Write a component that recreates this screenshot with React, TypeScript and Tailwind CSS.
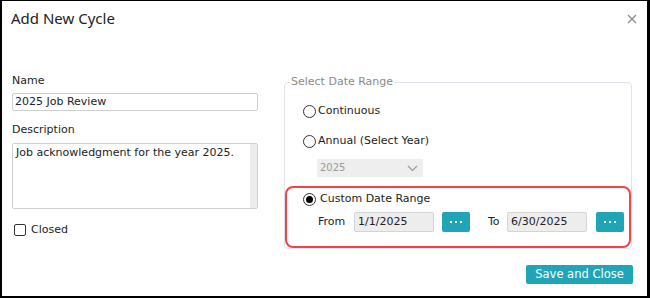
import type { ReactNode } from "react";

const body = "font-['DejaVu_Sans',sans-serif] text-[11px] leading-[14px] text-[#222]";

function Radio({ checked, children }: { checked?: boolean; children: ReactNode }) {
  return (
    <label className="flex h-[14px] items-center">
      <span className="flex h-[13px] w-[13px] items-center justify-center rounded-full border-[1.5px] border-[#333] bg-white">
        {checked && <span className="h-[7px] w-[7px] rounded-full bg-black" />}
      </span>
      <span className={checked ? "ml-[4px]" : "ml-[2px]"}>{children}</span>
    </label>
  );
}

function DateField({ value }: { value: string }) {
  return (
    <div className="flex h-[20px] w-[80px] items-center rounded-[2px] border border-[#d4d4d4] bg-[#ededed] pl-[3px]">
      {value}
    </div>
  );
}

function DotsButton() {
  return (
    <button className="flex h-[20px] w-[28px] items-center justify-center gap-[3px] rounded-[2px] bg-[#1fa5b6]">
      <span className="h-[2px] w-[2px] bg-white" />
      <span className="h-[2px] w-[2px] bg-white" />
      <span className="h-[2px] w-[2px] bg-white" />
    </button>
  );
}

export default function App() {
  return (
    <div
      className={`flex h-[298px] w-[650px] flex-col border-t border-l-2 border-r-[3px] border-b-2 border-black bg-white ${body}`}
    >
      {/* header */}
      <div className="flex h-[73px] items-start justify-between pl-[9px] pr-[10px] pt-[7px]">
        <h2 className="font-['Noto_Sans',sans-serif] text-[15px] leading-[20px] text-[#222]">
          Add New Cycle
        </h2>
        <svg width="10" height="10" viewBox="0 0 10 10" className="mt-[6px]">
          <path d="M1 1L9 9M9 1L1 9" stroke="#8a8a8a" strokeWidth="1.3" />
        </svg>
      </div>

      {/* body */}
      <div className="flex items-start pl-[10px] pr-[15px]">
        <div className="flex w-[246px] flex-col">
          <span>Name</span>
          <div className="mt-[5px] flex h-[18px] items-center rounded-[2px] border border-[#cfcfcf] pl-[2px]">
            2025 Job Review
          </div>
          <span className="mt-[12px]">Description</span>
          <div className="mt-[6px] flex h-[66px] rounded-[2px] border border-[#cfcfcf]">
            <div className="flex-1 pl-[3px] pt-[2px]">Job acknowledgment for the year 2025.</div>
            <div className="w-[7px] bg-[#ececec]" />
          </div>
          <label className="mt-[14px] flex h-[14px] items-center pl-[2px]">
            <span className="h-[12px] w-[12px] rounded-[2px] border border-[#333]" />
            <span className="ml-[5px]">Closed</span>
          </label>
        </div>

        <fieldset className="ml-[26px] mt-[1px] w-[348px] rounded-[4px] border border-[#dfe4ea] p-0">
          <legend className="ml-[5px] px-[1px] text-[#8a8a8a]">Select Date Range</legend>
          <div className="mt-[15px] pl-[18px]">
            <Radio>Continuous</Radio>
          </div>
          <div className="mt-[16px] pl-[18px]">
            <Radio>Annual (Select Year)</Radio>
          </div>
          <div className="ml-[32px] mt-[11px] flex h-[18px] w-[106px] items-center justify-between bg-[#eeeeee] pl-[3px] pr-[5px] text-[10px] text-[#9a9a9a]">
            2025
            <svg width="11" height="7" viewBox="0 0 11 7">
              <path d="M1 1L5.5 5.5L10 1" fill="none" stroke="#9a9a9a" strokeWidth="1.2" />
            </svg>
          </div>
          <div className="mt-[9px] rounded-[8px] border-2 border-[#f0444a] pb-[14px] pl-[16px] pt-[4px]">
            <Radio checked>Custom Date Range</Radio>
            <div className="mt-[6px] flex items-center pl-[15px]">
              <span className="w-[36px]">From</span>
              <DateField value="1/1/2025" />
              <div className="ml-[8px]">
                <DotsButton />
              </div>
              <span className="ml-[18px] w-[19px]">To</span>
              <DateField value="6/30/2025" />
              <div className="ml-[9px]">
                <DotsButton />
              </div>
            </div>
          </div>
        </fieldset>
      </div>

      {/* footer */}
      <div className="flex justify-end pr-[14px] pt-[16px]">
        <button className="h-[19px] w-[107px] rounded-[2px] bg-[#1fa5b6] text-[11.5px] leading-[19px] text-white">
          Save and Close
        </button>
      </div>
    </div>
  );
}
